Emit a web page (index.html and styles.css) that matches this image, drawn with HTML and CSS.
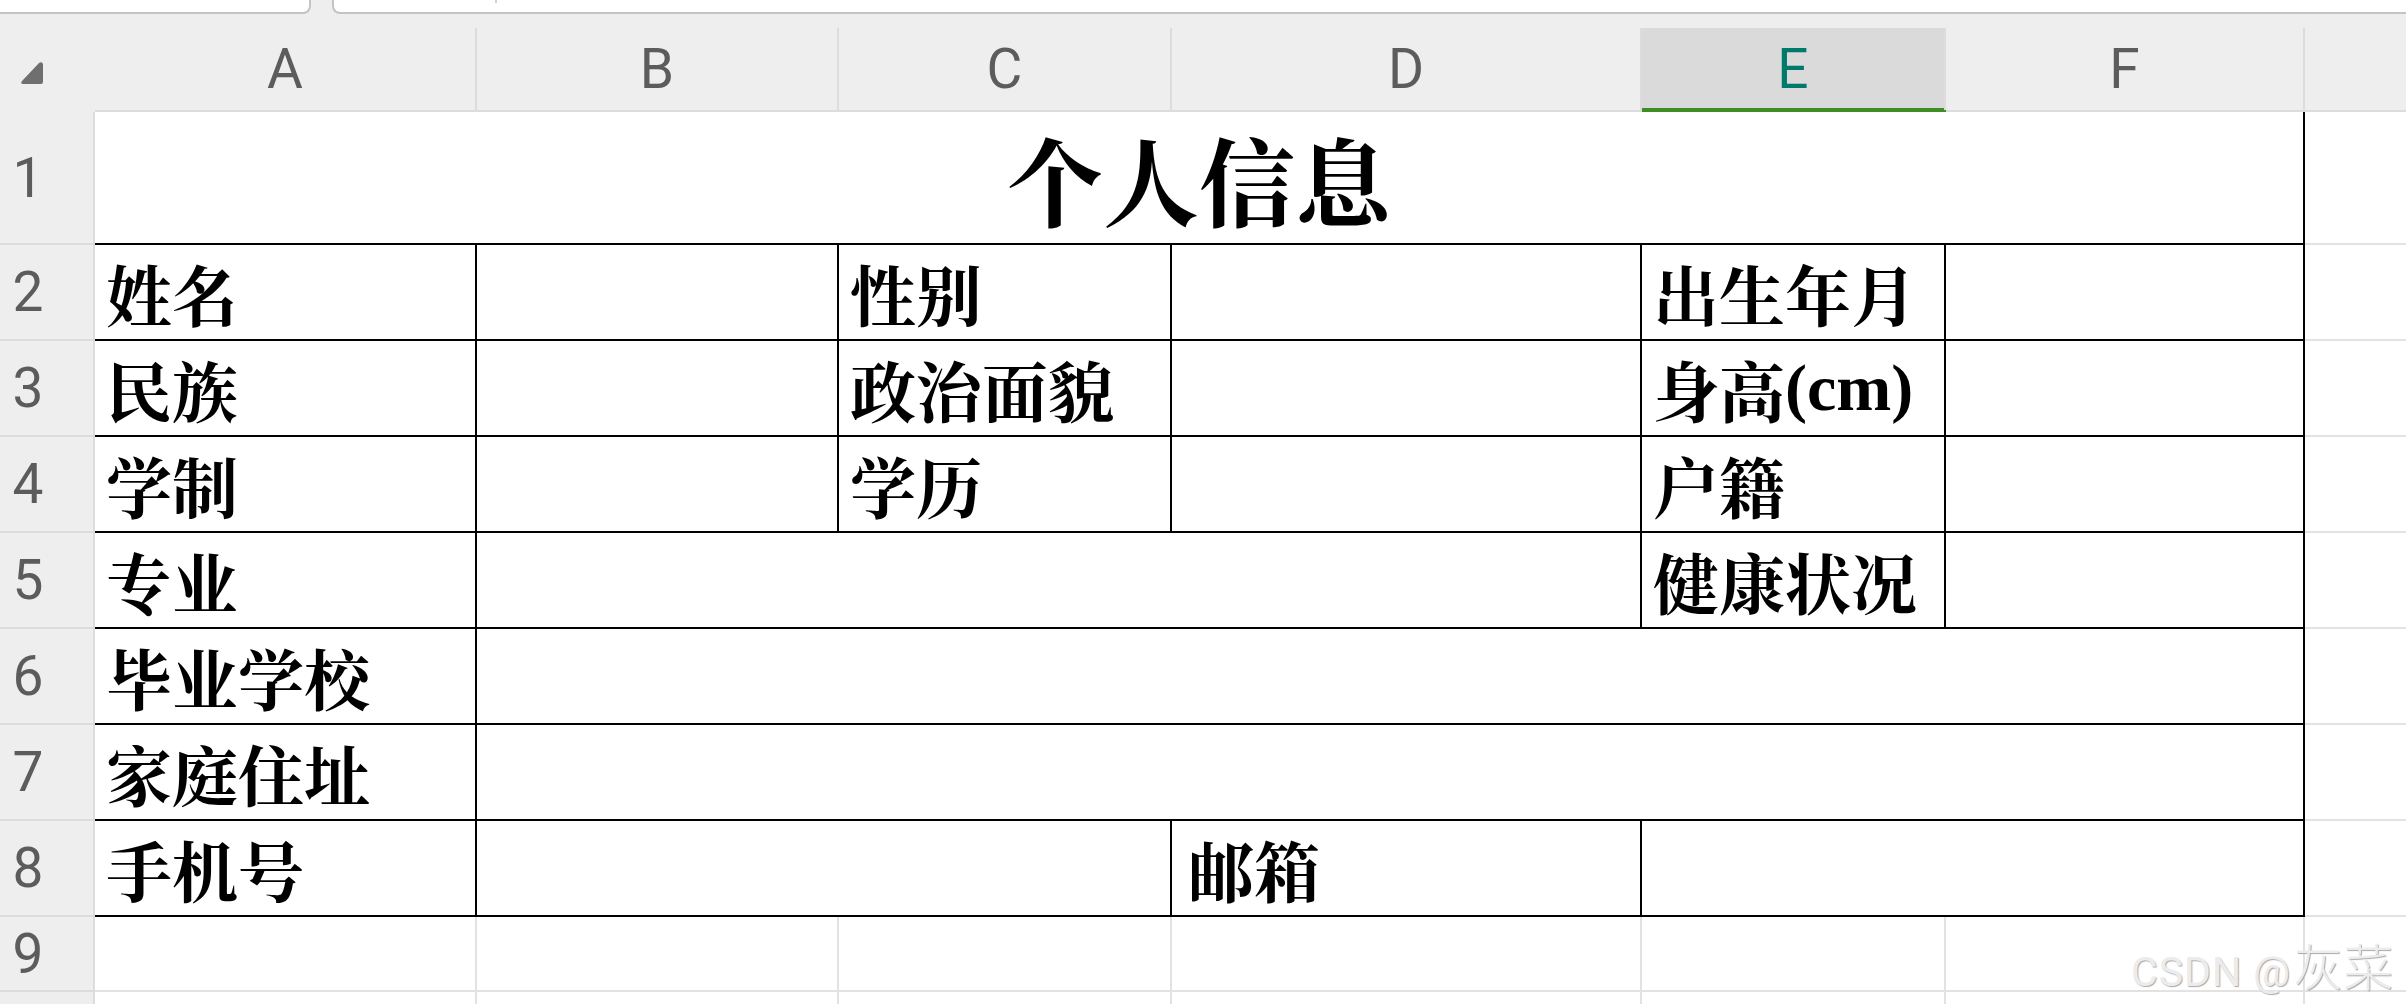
FILE: index.html
```html
<!DOCTYPE html>
<html lang="zh">
<head>
<meta charset="utf-8">
<title>个人信息</title>
<link rel="stylesheet" href="styles.css">
</head>
<body>
<div class="tabs">
  <div class="tab tab-left"></div>
  <div class="tab-gap"></div>
  <div class="tab tab-right"><span class="tick"></span></div>
</div>
<div class="sheet">
  <div class="corner">
    <svg class="corner-tri" width="24" height="24" viewBox="0 0 24 24"><path d="M19 2 Q22 0 23 3 L23 21 Q23 23 21 23 L3 23 Q0 23 2 20 Z" fill="#6f6f6f"/></svg>
  </div>
  <div class="ch"><div>A</div></div>
  <div class="ch"><div>B</div></div>
  <div class="ch"><div>C</div></div>
  <div class="ch"><div>D</div></div>
  <div class="ch sel"><div>E</div></div>
  <div class="ch"><div>F</div></div>
  <div class="ch last"><div></div></div>

  <div class="rh">1</div>
  <div class="c title span6">个人信息</div>
  <div class="g"></div>

  <div class="rh">2</div>
  <div class="c lbl">姓名</div>
  <div class="c"></div>
  <div class="c lbl">性别</div>
  <div class="c"></div>
  <div class="c lbl">出生年月</div>
  <div class="c"></div>
  <div class="g"></div>

  <div class="rh">3</div>
  <div class="c lbl">民族</div>
  <div class="c"></div>
  <div class="c lbl">政治面貌</div>
  <div class="c"></div>
  <div class="c lbl">身高<span class="latin">(cm)</span></div>
  <div class="c"></div>
  <div class="g"></div>

  <div class="rh">4</div>
  <div class="c lbl">学制</div>
  <div class="c"></div>
  <div class="c lbl">学历</div>
  <div class="c"></div>
  <div class="c lbl">户籍</div>
  <div class="c"></div>
  <div class="g"></div>

  <div class="rh">5</div>
  <div class="c lbl">专业</div>
  <div class="c span3"></div>
  <div class="c lbl">健康状况</div>
  <div class="c"></div>
  <div class="g"></div>

  <div class="rh">6</div>
  <div class="c lbl">毕业学校</div>
  <div class="c span5"></div>
  <div class="g"></div>

  <div class="rh">7</div>
  <div class="c lbl">家庭住址</div>
  <div class="c span5"></div>
  <div class="g"></div>

  <div class="rh">8</div>
  <div class="c lbl">手机号</div>
  <div class="c span2"></div>
  <div class="c lbl lbl-wide">邮箱</div>
  <div class="c span2"></div>
  <div class="g"></div>

  <div class="rh">9</div>
  <div class="e"></div>
  <div class="e"></div>
  <div class="e"></div>
  <div class="e"></div>
  <div class="e"></div>
  <div class="e"></div>
  <div class="g"></div>

  <div class="rh end"></div>
  <div class="e end"></div>
  <div class="e end"></div>
  <div class="e end"></div>
  <div class="e end"></div>
  <div class="e end"></div>
  <div class="e end"></div>
  <div class="g end"></div>
</div>
<div class="watermark"><span class="wm-latin">CSDN @</span><span class="wm-cjk">灰菜</span></div>
</body>
</html>
```
FILE: styles.css
```css
html, body {
  margin: 0;
  padding: 0;
}
body {
  width: 2406px;
  height: 1004px;
  overflow: hidden;
  background: #ffffff;
  position: relative;
  font-family: Roboto, "Liberation Sans", sans-serif;
}

/* top tab strip */
.tabs {
  display: flex;
  height: 14px;
  background: #eeeeee;
}
.tab {
  background: #ffffff;
  height: 12px;
  border-bottom: 2px solid #c4c4c4;
}
.tab-left {
  width: 309px;
  border-right: 2px solid #c4c4c4;
  border-bottom-right-radius: 8px;
}
.tab-gap {
  width: 21px;
}
.tab-right {
  flex: 1;
  border-left: 2px solid #c4c4c4;
  border-bottom-left-radius: 8px;
  position: relative;
}
.tick {
  position: absolute;
  left: 161px;
  top: 0;
  width: 2px;
  height: 3px;
  background: #d0d0d0;
}

/* sheet grid */
.sheet {
  display: grid;
  grid-template-columns: 95px 382px 362px 333px 470px 304px 359px 1fr;
  grid-template-rows: 98px 133px repeat(7, 96px) 75px 12px;
}

.corner {
  background: #eeeeee;
  position: relative;
}
.corner-tri {
  position: absolute;
  left: 20px;
  top: 47px;
}

.ch {
  background: #eeeeee;
  padding-top: 14px;
  border-bottom: 2px solid #dcdcdc;
}
.ch > div {
  height: 100%;
  box-sizing: border-box;
  border-right: 2px solid #dcdcdc;
  display: flex;
  align-items: center;
  justify-content: center;
  font-size: 55px;
  color: #5c5c5c;
}
.ch.last > div {
  border-right: none;
}
.ch.sel {
  border-bottom-color: #3e8e25;
}
.ch.sel > div {
  background: #dadada;
  color: #00796b;
  box-shadow: inset 0 -2px 0 #3e8e25;
}

.rh {
  background: #eeeeee;
  border-right: 2px solid #dcdcdc;
  border-bottom: 2px solid #dcdcdc;
  display: flex;
  align-items: center;
  justify-content: center;
  padding-right: 37px;
  font-size: 55px;
  color: #5c5c5c;
}
.rh.end {
  border-bottom: none;
}

.sheet > div {
  box-sizing: border-box;
  min-width: 0;
}

.c {
  border-right: 2px solid #000000;
  border-bottom: 2px solid #000000;
  display: flex;
  align-items: center;
  font-family: "Noto Serif CJK SC", "Noto Sans CJK SC", serif;
  font-weight: 700;
  color: #000000;
  white-space: nowrap;
}
.lbl {
  padding-left: 11px;
  font-size: 66px;
}
.lbl-wide {
  padding-left: 16px;
}
.latin {
  font-family: "Liberation Serif", serif;
  font-weight: 700;
}
.title {
  justify-content: center;
  font-size: 96px;
}
.span2 { grid-column: span 2; }
.span3 { grid-column: span 3; }
.span5 { grid-column: span 5; }
.span6 { grid-column: span 6; }

.e {
  border-right: 2px solid #e2e2e2;
  border-bottom: 2px solid #e2e2e2;
}
.e.end {
  border-bottom: none;
}
.g {
  border-bottom: 2px solid #e2e2e2;
}
.g.end {
  border-bottom: none;
}

/* watermark overlay */
.watermark {
  position: absolute;
  left: 2131px;
  top: 928px;
  display: flex;
  align-items: baseline;
  color: #ececec;
  text-shadow: 1px 1px 1px #a9a9a9;
  white-space: nowrap;
}
.wm-latin {
  font-family: Roboto, "Liberation Sans", sans-serif;
  font-size: 41px;
  letter-spacing: 1px;
  margin-right: 2px;
}
.wm-cjk {
  font-family: "Noto Sans CJK SC", sans-serif;
  font-size: 50px;
  font-weight: 300;
}
```
